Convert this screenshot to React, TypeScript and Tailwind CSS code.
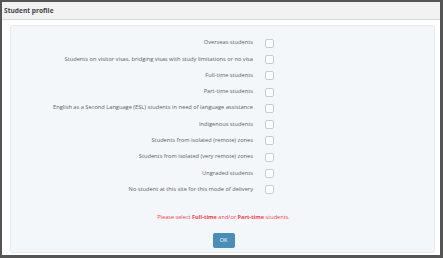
import React from "react";

const rows = [
  "Overseas students",
  "Students on visitor visas, bridging visas with study limitations or no visa",
  "Full-time students",
  "Part-time students",
  "English as a Second Language (ESL) students in need of language assistance",
  "Indigenous students",
  "Students from isolated (remote) zones",
  "Students from isolated (very remote) zones",
  "Ungraded students",
  "No student at this site for this mode of delivery",
];

export default function App() {
  return (
    <div
      className="w-[443px] h-[258px] overflow-hidden border-l-2 border-t-2 border-r-[3px] border-b-[3px] border-[#555] bg-white flex flex-col"
      style={{ fontFamily: '"Open Sans", "Noto Sans", sans-serif' }}
    >
      <div className="h-[18px] shrink-0 bg-[#f2f2f2] border-b border-[#d8d8d8] flex items-center px-[2px]">
        <span className="text-[6.6px] font-bold text-[#444]">Student profile</span>
      </div>
      <div className="flex-1 pl-[8px] pr-[5px] pt-[5px] pb-[2px] flex">
        <div className="flex-1 bg-[#f4f7fa] border border-[#e6eaee] rounded-[3px] pt-[9px] flex flex-col">
          {rows.map((r) => (
            <div key={r} className="h-[16.3px] flex items-center">
              <div className="w-[242px] text-right text-[5.7px] text-[#606060] leading-none">{r}</div>
              <div className="ml-[12px] w-[9px] h-[9px] rounded-[2px] border border-[#c9ccd0] bg-white" />
            </div>
          ))}
          <div className="mt-[17px] text-center text-[5.6px] text-[#f2414b] leading-none pl-[2px]">
            Please select <b>Full-time</b> and/or <b>Part-time</b> students.
          </div>
          <div className="mt-[12px] flex justify-center pl-[2px]">
            <div className="w-[22px] h-[15px] rounded-[2px] bg-[#4a8db5] text-white text-[5.5px] flex items-center justify-center">
              OK
            </div>
          </div>
        </div>
      </div>
    </div>
  );
}
